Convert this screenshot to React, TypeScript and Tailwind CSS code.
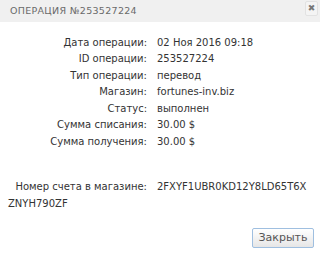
import React from 'react';

const rows: [string, string][] = [
  ['Дата операции:', '02 Ноя 2016 09:18'],
  ['ID операции:', '253527224'],
  ['Тип операции:', 'перевод'],
  ['Магазин:', 'fortunes-inv.biz'],
  ['Статус:', 'выполнен'],
  ['Сумма списания:', '30.00 $'],
  ['Сумма получения:', '30.00 $'],
];

const App: React.FC = () => {
  return (
    <div
      className="w-[320px] h-[255px] bg-white text-[#333] flex flex-col"
      style={{ fontFamily: '"DejaVu Sans", sans-serif' }}
    >
      {/* Header */}
      <div className="h-[22px] bg-[#f0f0f0] flex items-center justify-between pl-[10px] pr-[2px]">
        <span className="text-[9.5px] tracking-[0.3px] text-[#6a6a6a] pt-[1px]">ОПЕРАЦИЯ №253527224</span>
        <button className="w-[13px] h-[15px] -mt-[5px] border border-[#e2e2e2] rounded-[2px] bg-[#f4f4f4] flex items-center justify-center text-[9px] text-[#777] leading-none">
          ✖
        </button>
      </div>

      {/* Details */}
      <div className="pt-[12px] text-[10px]">
        {rows.map(([label, value]) => (
          <div key={label} className="flex h-[16.5px] items-center">
            <span className="w-[147px] text-right">{label}</span>
            <span className="pl-[10px]">{value}</span>
          </div>
        ))}

        <p className="mt-[28px] pl-[8px] pr-[12px] leading-[17px] break-all">
          <span className="inline-block w-[139px] text-right break-normal">Номер счета в магазине:</span>
          <span className="pl-[10px]">2FXYF1UBR0KD12Y8LD65T6XZNYH790ZF</span>
        </p>
      </div>

      {/* Footer */}
      <div className="mt-auto flex justify-end pr-[6px] pb-[7px]">
        <button className="w-[62px] h-[20px] border border-[#9fbfe0] rounded-[2px] bg-gradient-to-b from-white to-[#e6e6e6] text-[11px] text-[#555]">
          Закрыть
        </button>
      </div>
    </div>
  );
};

export default App;
